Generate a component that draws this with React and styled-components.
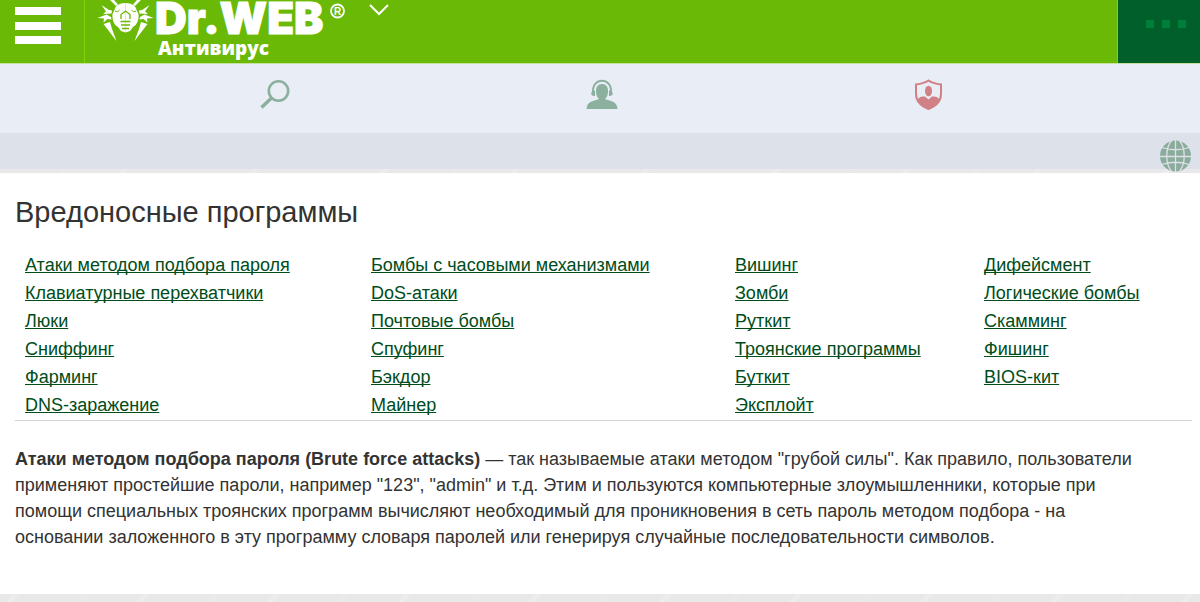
import React from 'react';
import styled, { createGlobalStyle } from 'styled-components';

const GlobalStyle = createGlobalStyle`
    * {
        box-sizing: border-box;
    }

    body {
        margin: 0;
        background: repeating-linear-gradient(132deg, #e8e8e8 0 8px, #ededed 12px, #e8e8e8 16px 60px, #eaeaea 64px, #e8e8e8 68px 97px);
        color: #333333;
        font-family: "Liberation Sans", Arial, sans-serif;
    }
`;

const Header = styled.header`
    display: flex;
    height: 64px;
    background-color: #6ab907;
    border-bottom: 1px solid #c5e29c;
`;

const MenuButton = styled.button`
    width: 85px;
    padding: 7px 24px 19px 15px;
    border: none;
    border-right: 1px solid #83d30b;
    background: none;
    display: flex;
    flex-direction: column;
    justify-content: space-between;
`;

const MenuBar = styled.span`
    width: 46px;
    height: 8px;
    background-color: white;
`;

const Brand = styled.a`
    display: block;
    margin-left: 10px;
    height: 63px;
`;

const DropButton = styled.button`
    width: 36px;
    height: 20px;
    margin-left: 14px;
    padding: 0;
    border: none;
    background: none;
`;

const MoreButton = styled.button`
    width: 83px;
    margin-left: auto;
    padding: 20px 14px 0 28px;
    border: none;
    border-left: 1px solid #83d30b;
    background-color: #005f2b;
    display: flex;
    justify-content: space-between;
`;

const Dot = styled.span`
    width: 8px;
    height: 8px;
    background-color: #007d38;
`;

const Toolbar = styled.nav`
    display: flex;
    justify-content: space-around;
    height: 69px;
    padding: 14px 108px 0 112px;
    background-color: #e9edf5;
`;

const ToolLink = styled.a`
    width: 34px;
    height: 34px;
`;

const LangBar = styled.div`
    display: flex;
    justify-content: flex-end;
    height: 36px;
    padding: 6px 7px 0 0;
    background-color: #dde1e9;
`;

const LangButton = styled.button`
    width: 34px;
    height: 34px;
    padding: 0;
    border: none;
    background: none;
`;

const Icon = styled.svg`
    display: block;
    overflow: visible;
`;

const Content = styled.main`
    margin-top: 4px;
    padding: 20px 8px 44px 15px;
    background-color: white;
`;

const Title = styled.h1`
    margin: 0 0 19px;
    font-size: 29px;
    font-weight: normal;
    line-height: 39px;
`;

const Columns = styled.div`
    display: grid;
    grid-template-columns: 346fr 364fr 249fr 208fr;
    padding: 0 0 1px 10px;
    border-bottom: 1px solid #d2d2d2;
`;

const List = styled.ul`
    margin: 0;
    padding: 0;
    list-style: none;
    font-size: 18px;
    line-height: 28px;
`;

const TermLink = styled.a`
    color: #004d1a;
    text-decoration: underline;
    text-decoration-skip-ink: none;
    white-space: nowrap;
`;

const Article = styled.p`
    margin: 25px 0 0;
    font-size: 18px;
    line-height: 26px;
`;

const columns = [
    ['Атаки методом подбора пароля', 'Клавиатурные перехватчики', 'Люки', 'Сниффинг', 'Фарминг', 'DNS-заражение'],
    ['Бомбы с часовыми механизмами', 'DoS-атаки', 'Почтовые бомбы', 'Спуфинг', 'Бэкдор', 'Майнер'],
    ['Вишинг', 'Зомби', 'Руткит', 'Троянские программы', 'Буткит', 'Эксплойт'],
    ['Дифейсмент', 'Логические бомбы', 'Скамминг', 'Фишинг', 'BIOS-кит'],
];

const Logo = () => (
    <Icon width="255" height="63" viewBox="95 0 255 63" fill="white">
        <g id="half">
            <path d="M125.5 3 C119 3 115 6 114.500 10 L112.5 14 C112 20 114 25 118 27 L121 31 L125.5 32.500Z" />
            <path d="M103.500 24 L110 22 L112 29 L116.500 41Z" />
            <path d="M97.5 18 L106.5 14.5 L111 17 L111.5 19.5 L107.5 19 L103.5 22.5 L104 18.500Z" />
            <path d="M101.5 5 L109 10 L112 10.500 L111.5 13.5 L103 14 L106 11.500Z" />
            <path d="M110 0 L116 6 L118 4.500 L114 0Z" />
        </g>
        <use href="#half" transform="translate(251 0) scale(-1 1)" />
        <path d="M121 19 V14.5 L125.5 11 L130 14.5 V19 M120.5 21.5 H130.5 M121 25 H130 M122 28.5 H129" fill="none" stroke="#6ab907" strokeWidth="1.3" />
        <path d="M115 11 Q118 13 119.5 10 M136 11 Q133 13 131.5 10" fill="none" stroke="#6ab907" strokeWidth="1" />
        <text x="155" y="33.5" fontFamily="Inter, sans-serif" fontWeight="900" fontSize="44" stroke="white" strokeWidth="1">Dr.WEB</text>
        <text x="158" y="55" fontFamily="Open Sans, sans-serif" fontWeight="800" fontSize="19">Антивирус</text>
        <circle cx="337.5" cy="11" r="6.5" fill="none" stroke="white" strokeWidth="1.8" />
        <text x="334" y="15" fontFamily="Liberation Sans, sans-serif" fontWeight="bold" fontSize="10">R</text>
    </Icon>
);

const SearchIcon = () => (
    <Icon width="34" height="34" viewBox="258 78 34 34" fill="none" stroke="#8bb09e">
        <circle cx="278.5" cy="91" r="9.7" strokeWidth="2.6" />
        <path d="M271.5 98 L261.5 107.5" strokeWidth="3.4" />
    </Icon>
);

const SupportIcon = () => (
    <Icon width="34" height="34" viewBox="585 78 34 34" fill="#8bb09e">
        <path d="M593 92 C592 77 612 77 611 92" fill="none" stroke="#8bb09e" strokeWidth="2" />
        <path d="M595 90.5 V96 C590 96.5 590 90.5 595 90.5Z M609 90.5 V96 C614 96.5 614 90.5 609 90.5Z" />
        <path d="M602 84 C598 84 596 87 596 91 C596 95 597 97 599 99 C594 101 587 101 586.5 109 H617.5 C617 101 610 101 605 99 C607 97 608 95 608 91 C608 87 606 84 602 84Z" />
    </Icon>
);

const ShieldIcon = () => (
    <Icon width="34" height="34" viewBox="912 78 34 34" fill="#d18086">
        <path d="M928.5 80.5 C925 83 920 84 916 84.5 V94 C916 101 921 106 928.5 109 C936 106 941 101 941 94 V84.5 C937 84 932 83 928.5 80.5Z" fill="none" stroke="#d18086" strokeWidth="2" />
        <ellipse cx="928.5" cy="91" rx="3.5" ry="5.2" />
        <path d="M917 101 C918 97 922 96 925 96.5 L928.5 99.5 L932 96.5 C935 96 939 97 940 101 C937 105 933 108 928.5 109 C924 108 920 105 917 101Z" />
    </Icon>
);

const GlobeIcon = () => (
    <Icon width="34" height="34" viewBox="1159 139 34 34">
        <circle cx="1175.5" cy="156" r="15.5" fill="#8bab9b" />
        <path d="M1175.5 140 V172 M1159 156.5 H1192 M1162 147.5 Q1175.5 152 1189 147.5 M1162 164.5 Q1175.5 160 1189 164.5 M1172 140 C1165 148 1165 164 1172 172 M1179 140 C1186 148 1186 164 1179 172" fill="none" stroke="#dde1e9" strokeWidth="1.3" />
    </Icon>
);

const App = () => {
    return (
        <>
            <GlobalStyle />
            <Header>
                <MenuButton aria-label="Меню">
                    <MenuBar />
                    <MenuBar />
                    <MenuBar />
                </MenuButton>
                <Brand href="#" aria-label="Dr.WEB Антивирус">
                    <Logo />
                </Brand>
                <DropButton aria-label="Разделы">
                    <Icon width="36" height="20" viewBox="364 0 36 20" fill="none" stroke="white" strokeWidth="2">
                        <path d="M370 5 L379 14 L388 5" />
                    </Icon>
                </DropButton>
                <MoreButton aria-label="Ещё">
                    <Dot />
                    <Dot />
                    <Dot />
                </MoreButton>
            </Header>

            <Toolbar>
                <ToolLink href="#" aria-label="Поиск"><SearchIcon /></ToolLink>
                <ToolLink href="#" aria-label="Поддержка"><SupportIcon /></ToolLink>
                <ToolLink href="#" aria-label="Защита"><ShieldIcon /></ToolLink>
            </Toolbar>

            <LangBar>
                <LangButton aria-label="Язык"><GlobeIcon /></LangButton>
            </LangBar>

            <Content>
                <Title>Вредоносные программы</Title>
                <Columns>
                    {columns.map((terms) => (
                        <List key={terms[0]}>
                            {terms.map((term) => (
                                <li key={term}><TermLink href="#">{term}</TermLink></li>
                            ))}
                        </List>
                    ))}
                </Columns>
                <Article>
                    <b>Атаки методом подбора пароля (Brute force attacks)</b> — так называемые атаки методом "грубой силы". Как правило, пользователи
                    <br />
                    применяют простейшие пароли, например "123", "admin" и т.д. Этим и пользуются компьютерные злоумышленники, которые при
                    <br />
                    помощи специальных троянских программ вычисляют необходимый для проникновения в сеть пароль методом подбора - на
                    <br />
                    основании заложенного в эту программу словаря паролей или генерируя случайные последовательности символов.
                </Article>
            </Content>
        </>
    )
}

export default App;
